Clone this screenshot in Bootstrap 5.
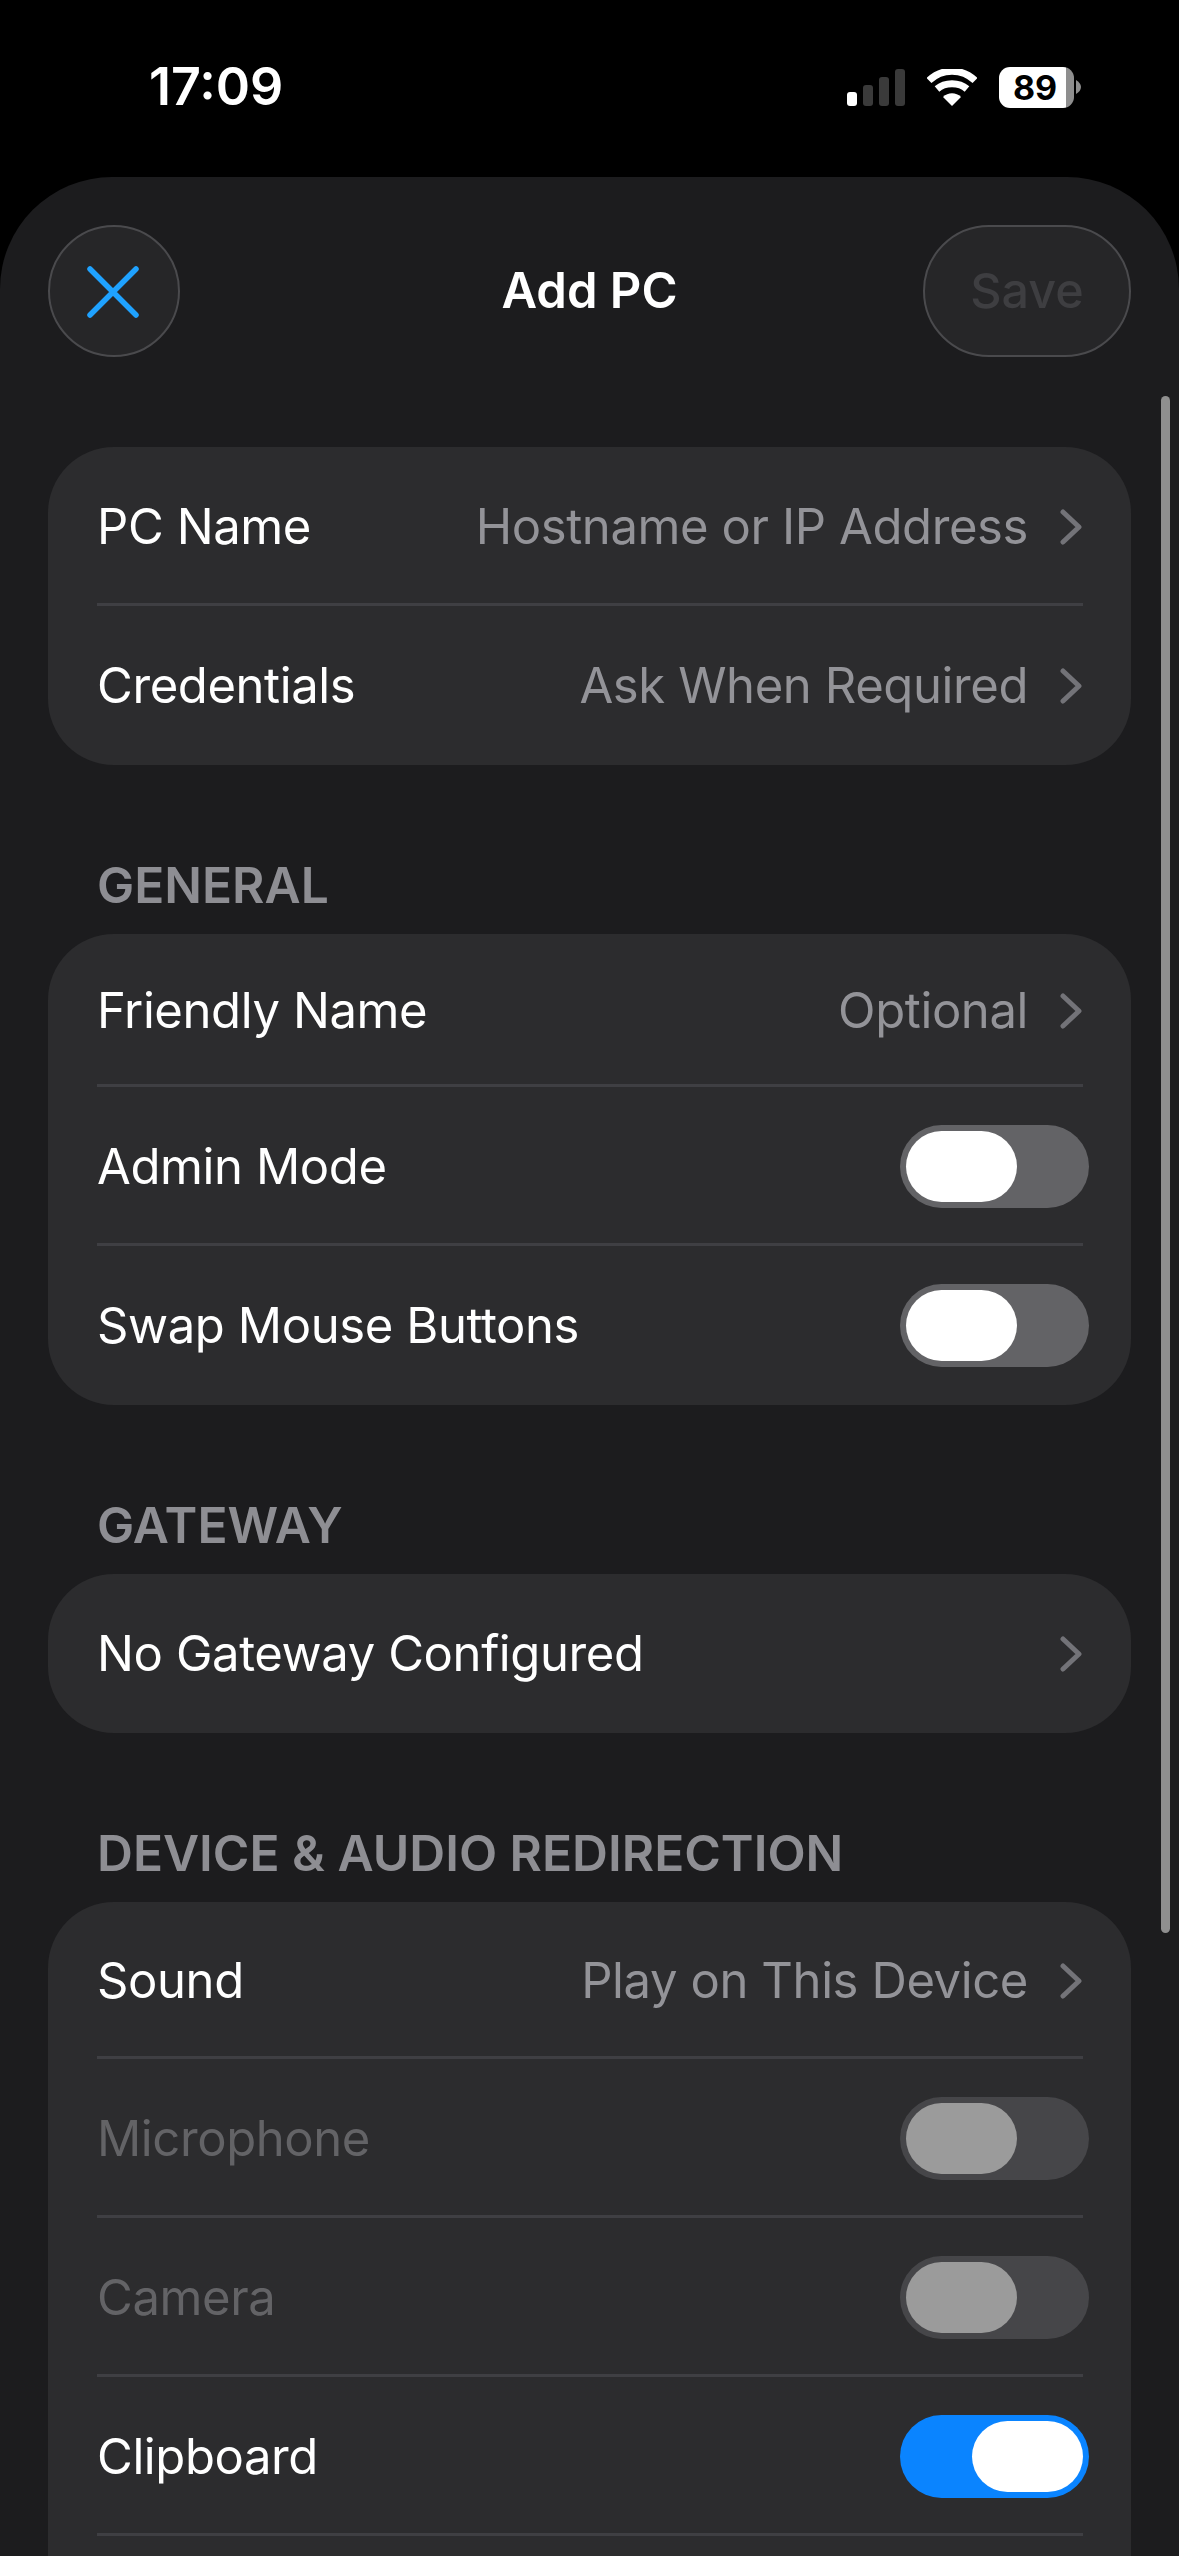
<!DOCTYPE html>
<html lang="en" data-bs-theme="dark">
<head>
  <meta charset="UTF-8">
  <meta name="viewport" content="width=device-width, initial-scale=1.0">
  <title>Add PC</title>
  <link href="https://cdn.jsdelivr.net/npm/bootstrap@5.3.2/dist/css/bootstrap.min.css" rel="stylesheet">
  <style>
    html, body {
      height: 2556px;
      overflow: hidden;
      background: #000;
    }

    body {
      font-family: Inter, "Liberation Sans", sans-serif;
      color: #fff;
    }

    .status-bar {
      height: 177px;
      padding: 0 98px 3px 149px;
    }

    .status-time {
      font-size: 52px;
      font-weight: 600;
      line-height: 1;
    }

    .status-icons {
      gap: 22px;
    }

    .battery-wrap {
      gap: 2px;
    }

    .battery {
      width: 75px;
      height: 41px;
      border-radius: 11px;
      background: linear-gradient(90deg, #fff 89%, #8e8e8e 89%);
      color: #000;
      font-size: 34px;
      font-weight: 700;
      line-height: 41px;
      text-align: center;
      padding-right: 3px;
    }

    .sheet {
      height: 2379px;
      background: #1c1c1e;
      border-radius: 112px 112px 0 0;
      padding: 48px 48px 0;
      position: relative;
      overflow: hidden;
    }

    .sheet-head {
      height: 132px;
      margin-bottom: 90px;
    }

    .head-btn {
      height: 132px;
      background: #262628;
      border: 2px solid #4a4a4d;
      border-radius: 66px;
    }

    .head-close {
      width: 132px;
    }

    .head-save {
      width: 208px;
      color: #3e3e41;
      font-size: 48.5px;
      font-weight: 500;
    }

    .sheet-title {
      font-size: 49px;
      font-weight: 600;
    }

    .scroll-thumb {
      position: absolute;
      top: 219px;
      right: 9px;
      width: 9px;
      height: 1537px;
      border-radius: 5px;
      background: #8f8f8f;
    }

    .group {
      --bs-list-group-bg: #2c2c2e;
      --bs-list-group-border-width: 0;
      --bs-list-group-border-radius: 66px;
      --bs-list-group-color: #fff;
    }

    .group-label {
      color: #8e8e93;
      font-size: 49.7px;
      font-weight: 600;
      line-height: 56px;
      padding-left: 49px;
      margin-top: 92px;
      margin-bottom: 21px;
    }

    .cell {
      height: 159px;
      padding: 0 49px;
      font-size: 49px;
      letter-spacing: -.4px;
    }

    .cell-short {
      height: 153px;
    }

    .cell-mid {
      height: 157px;
    }

    .cell-tail {
      height: 20px;
      border-radius: 0 !important;
    }

    .cell::after {
      content: "";
      position: absolute;
      left: 49px;
      right: 48px;
      bottom: 0;
      height: 3px;
      background: #3f3f43;
    }

    .cell:last-child::after {
      display: none;
    }

    .cell-off {
      color: #636366;
    }

    .cell-value {
      color: #939398;
      gap: 32px;
    }

    .toggle {
      width: 189px;
      height: 83px;
      margin-right: -7px;
      padding: 6px;
      border-radius: 42px;
      background: #636366;
    }

    .toggle span {
      width: 111px;
      height: 71px;
      border-radius: 36px;
      background: #fff;
    }

    .toggle-off {
      background: #464649;
    }

    .toggle-off span {
      background: #9b9b9b;
    }

    .toggle-on {
      background: #0a84ff;
      justify-content: flex-end;
    }
  </style>
</head>
<body>
  <div class="status-bar d-flex align-items-center justify-content-between">
    <div class="status-time">17:09</div>
    <div class="status-icons d-flex align-items-center">
      <svg width="58" height="37" viewBox="0 0 58 37">
        <rect x="0" y="23" width="10" height="14" rx="3" fill="#fff"/>
        <rect x="16" y="16" width="10" height="21" rx="3" fill="#3a3a3a"/>
        <rect x="32" y="8" width="10" height="29" rx="3" fill="#3a3a3a"/>
        <rect x="48" y="0" width="10" height="37" rx="3" fill="#3a3a3a"/>
      </svg>
      <svg width="50" height="37" viewBox="0 0 50 37">
        <path d="M2 11.5 C15 -1 35 -1 48 11.5" fill="none" stroke="#fff" stroke-width="7"/>
        <path d="M10 20 C18 13 32 13 40 20" fill="none" stroke="#fff" stroke-width="7"/>
        <path d="M16 28 C21 23 29 23 34 28 L25 37 Z" fill="#fff"/>
      </svg>
      <div class="battery-wrap d-flex align-items-center">
        <div class="battery">89</div>
        <svg width="5" height="14" viewBox="0 0 5 14"><path d="M0 0 C3 2 5 4 5 7 C5 10 3 12 0 14 Z" fill="#8e8e8e"/></svg>
      </div>
    </div>
  </div>

  <div class="sheet">
    <div class="sheet-head d-flex align-items-center justify-content-between position-relative">
      <div class="head-btn head-close d-flex align-items-center justify-content-center">
        <svg width="56" height="56" viewBox="0 0 56 56">
          <path d="M4 6 L50 52 M50 6 L4 52" stroke="#1fa2ff" stroke-width="5.5" stroke-linecap="round"/>
        </svg>
      </div>
      <div class="sheet-title position-absolute top-50 start-50 translate-middle">Add PC</div>
      <div class="head-btn head-save d-flex align-items-center justify-content-center">Save</div>
    </div>
    <div class="scroll-thumb"></div>

    <div class="list-group group">
      <div class="list-group-item cell d-flex align-items-center justify-content-between">
        <span>PC Name</span>
        <span class="d-flex align-items-center cell-value">Hostname or IP Address
          <svg width="22" height="36" viewBox="0 0 22 36"><path d="M3 3 L19 18 L3 33" fill="none" stroke="#737378" stroke-width="5" stroke-linecap="round" stroke-linejoin="round"/></svg>
        </span>
      </div>
      <div class="list-group-item cell d-flex align-items-center justify-content-between">
        <span>Credentials</span>
        <span class="d-flex align-items-center cell-value">Ask When Required
          <svg width="22" height="36" viewBox="0 0 22 36"><path d="M3 3 L19 18 L3 33" fill="none" stroke="#737378" stroke-width="5" stroke-linecap="round" stroke-linejoin="round"/></svg>
        </span>
      </div>
    </div>

    <div class="group-label">GENERAL</div>
    <div class="list-group group">
      <div class="list-group-item cell cell-short d-flex align-items-center justify-content-between">
        <span>Friendly Name</span>
        <span class="d-flex align-items-center cell-value">Optional
          <svg width="22" height="36" viewBox="0 0 22 36"><path d="M3 3 L19 18 L3 33" fill="none" stroke="#737378" stroke-width="5" stroke-linecap="round" stroke-linejoin="round"/></svg>
        </span>
      </div>
      <div class="list-group-item cell d-flex align-items-center justify-content-between">
        <span>Admin Mode</span>
        <div class="toggle d-flex"><span></span></div>
      </div>
      <div class="list-group-item cell d-flex align-items-center justify-content-between">
        <span>Swap Mouse Buttons</span>
        <div class="toggle d-flex"><span></span></div>
      </div>
    </div>

    <div class="group-label">GATEWAY</div>
    <div class="list-group group">
      <div class="list-group-item cell d-flex align-items-center justify-content-between">
        <span>No Gateway Configured</span>
        <svg width="22" height="36" viewBox="0 0 22 36"><path d="M3 3 L19 18 L3 33" fill="none" stroke="#737378" stroke-width="5" stroke-linecap="round" stroke-linejoin="round"/></svg>
      </div>
    </div>

    <div class="group-label">DEVICE &amp; AUDIO REDIRECTION</div>
    <div class="list-group group">
      <div class="list-group-item cell cell-mid d-flex align-items-center justify-content-between">
        <span>Sound</span>
        <span class="d-flex align-items-center cell-value">Play on This Device
          <svg width="22" height="36" viewBox="0 0 22 36"><path d="M3 3 L19 18 L3 33" fill="none" stroke="#737378" stroke-width="5" stroke-linecap="round" stroke-linejoin="round"/></svg>
        </span>
      </div>
      <div class="list-group-item cell cell-off d-flex align-items-center justify-content-between">
        <span>Microphone</span>
        <div class="toggle toggle-off d-flex"><span></span></div>
      </div>
      <div class="list-group-item cell cell-off d-flex align-items-center justify-content-between">
        <span>Camera</span>
        <div class="toggle toggle-off d-flex"><span></span></div>
      </div>
      <div class="list-group-item cell d-flex align-items-center justify-content-between">
        <span>Clipboard</span>
        <div class="toggle toggle-on d-flex"><span></span></div>
      </div>
      <div class="list-group-item cell cell-tail"></div>
    </div>
  </div>

  <script src="https://cdn.jsdelivr.net/npm/bootstrap@5.3.2/dist/js/bootstrap.bundle.min.js"></script>
</body>
</html>
